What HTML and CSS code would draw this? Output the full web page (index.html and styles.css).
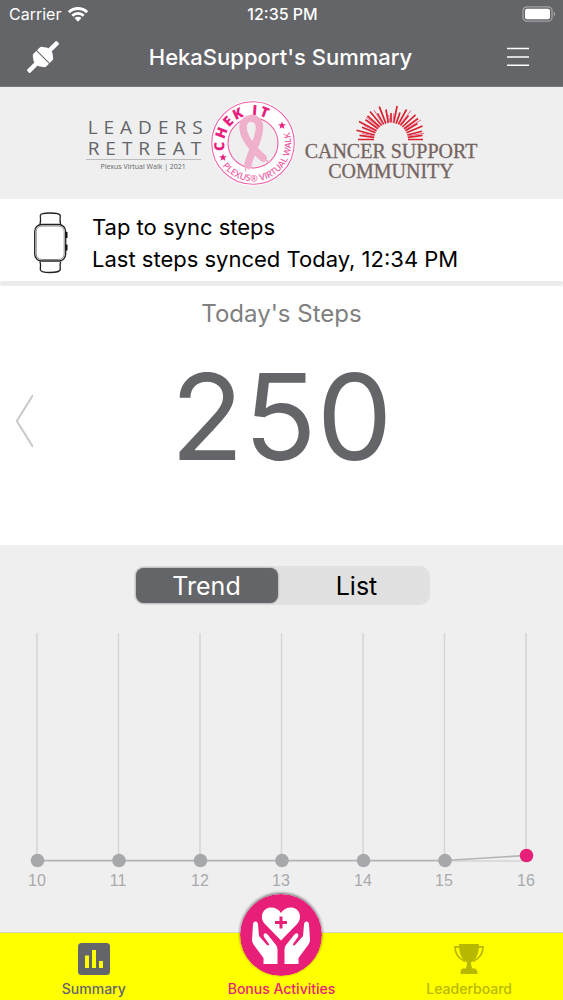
FILE: index.html
```
<!DOCTYPE html>
<html lang="en">
<head>
	<meta charset="utf-8">
	<meta name="viewport" content="width=device-width, initial-scale=1">
	<title>HekaSupport's Summary</title>
	<link rel="stylesheet" href="styles.css">
</head>
<body>
<div class="app">

	<header class="header">
		<div class="status-bar">
			<div class="carrier">
				<span>Carrier</span>
				<svg class="wifi" viewBox="0 0 20 16" width="20" height="16">
					<g fill="none" stroke="#fff" stroke-width="2.8">
						<path d="M0.9 6.2a13 13 0 0 1 18.2 0"/>
						<path d="M4.3 9.7a8.2 8.2 0 0 1 11.4 0"/>
					</g>
					<path d="M6.5 12.1a5 5 0 0 1 7 0L10 15.8z" fill="#fff"/>
				</svg>
			</div>
			<div class="clock">12:35 PM</div>
			<svg class="battery" viewBox="0 0 34 16" width="34" height="16">
				<rect x="1" y="0.8" width="29" height="14.4" rx="4" fill="none" stroke="#a3a4a7" stroke-width="1.3"/>
				<rect x="3" y="2.8" width="25" height="10.4" rx="2" fill="#fff"/>
				<path d="M31.6 5.6c2 .8 2 4 0 4.8z" fill="#a3a4a7"/>
			</svg>
		</div>
		<div class="nav-bar">
			<button class="icon-button" type="button" aria-label="Connect device">
				<svg viewBox="0 0 34 34" width="34" height="34">
					<g transform="rotate(45 17 17)" fill="#fff">
						<rect x="14.800" y="-4" width="4.400" height="14" rx="1"/>
						<path d="M8 16.500V12.500q0-1.500 1.500-2.300L12.500 8q1-.800 2-.800h5q1 0 2 .800L24.500 10.200q1.500.800 1.500 2.300v4z"/>
						<path d="M8 17.500h18V21.500q0 1.500-1.500 2.300L21.500 26q-1 .800-2 .800h-5q-1 0-2-.800L9.500 23.800Q8 23 8 21.500z"/>
						<rect x="14.800" y="24" width="4.400" height="14" rx="1"/>
					</g>
				</svg>
			</button>
			<h1 class="title">HekaSupport's Summary</h1>
			<button class="icon-button" type="button" aria-label="Menu">
				<svg viewBox="0 0 22 20" width="22" height="20">
					<path d="M0 1.500h22M0 10h22M0 18.300h22" stroke="#fff" stroke-width="1.400"/>
				</svg>
			</button>
		</div>
	</header>

	<section class="sponsors">
		<div class="leaders">
			<div class="leaders-name">LEADERS</div>
			<div class="leaders-name">RETREAT</div>
			<div class="leaders-note">Plexus Virtual Walk | 2021</div>
		</div>
		<svg class="badge" viewBox="0 0 86 86" width="86" height="86">
			<defs>
				<path id="arc-top" d="M15.100 50.800A29 29 0 0 1 71.600 37.400"/>
				<path id="arc-bottom" d="M12.500 65.700A38 38 0 0 0 79.800 33"/>
				<path id="star" d="M0-4L1-1.300 3.900-1.300 1.600.500 2.400 3.300 0 1.700-2.400 3.300-1.600.500-3.900-1.300-1-1.300z"/>
			</defs>
			<circle cx="43" cy="43" r="34" fill="none" stroke="#fff" stroke-width="17.500"/>
			<circle cx="43" cy="43" r="41.300" fill="none" stroke="#f05fa8" stroke-width="1.100"/>
			<circle cx="43" cy="43" r="25" fill="none" stroke="#f05fa8" stroke-width="1.100"/>
			<g fill="#e71f7e">
				<text class="badge-top"><textPath href="#arc-top">CHEK IT</textPath></text>
				<use href="#star" x="13" y="57.500"/>
				<use href="#star" x="72" y="25.500"/>
			</g>
			<text class="badge-bottom"><textPath href="#arc-bottom">PLEXUS® VIRTUAL WALK</textPath></text>
			<g fill="none" stroke="#efb0cc" stroke-linecap="round">
				<path d="M38 65C39 55 49.500 41 49.500 27C49.500 15 33 16 33 27C33 36 42 48 53 58" stroke-width="7.500"/>
				<path d="M35.500 62v9M39 66v3M54 60l6 2" stroke-width="1.500"/>
			</g>
		</svg>
		<div class="community">
			<svg viewBox="0 0 72 36" width="72" height="36">
				<g stroke-width="1.700" stroke="#d8232f">
					<path d="M19 34.500H3M19.200 32.300L4.500 30.400M19.700 30L1.500 25.300M20.500 27.700L7 22.300M21.600 25.700L4 16.500M23 23.700L10.500 14.800M24.700 22L12.500 10.800M26.600 20.500L15 6.500M28.700 19.400L22.500 8.300M30.900 18.600L24.300 1.600M33.300 18L31 4.500M36 17.500V8"/>
					<path d="M53 34.500H68M52.800 32.300L67.500 30.400M52.300 30L67 26.200M51.500 27.700L67.500 21M50.400 25.700L62.500 18.500M49 23.700L63 13.500M47.300 22L60.500 9.800M45.400 20.500L53.500 10.500M43.300 19.400L51.500 4.500M41.100 18.600L45 7.500M38.700 18L42.100 1"/>
				</g>
				<g stroke-width="1" stroke="#e8668f">
					<path d="M19.300 31L7 28.500M21 26.500L9 20.500M24 22.700L11 12M28 19.700L19 5M35 17.600L33.500 10"/>
					<path d="M52.500 31L69 28.300M49.800 24.700L66 15M44.500 20L56 5.500M38 17.700L39 8"/>
				</g>
			</svg>
			<div class="community-name">CANCER SUPPORT<br>COMMUNITY</div>
		</div>
	</section>

	<button class="sync" type="button">
		<svg class="watch" viewBox="0 0 36 62" width="36" height="62">
			<g fill="none" stroke="#222" stroke-width="1.300">
				<path d="M7 12.500Q8 9 7.300 3.500Q7.300 1 17 1T27.300 3.500Q26.600 9 27.600 12.500"/>
				<path d="M7 49.500Q8 53 7.300 57.500Q7.300 60.500 17 60.500T27.300 57.500Q26.600 53 27.600 49.500"/>
				<rect x="1.700" y="12.500" width="31" height="36.500" rx="7"/>
				<rect x="3.200" y="14" width="28" height="33.500" rx="5.500" stroke="#888" stroke-width="1"/>
			</g>
			<path d="M33.500 20v6M33.500 32.500v6" stroke="#111" stroke-width="2"/>
		</svg>
		<span>Tap to sync steps<br>Last steps synced Today, 12:34 PM</span>
	</button>
	<div class="divider"></div>

	<section class="steps">
		<h2 class="steps-title">Today's Steps</h2>
		<div class="steps-row">
			<button class="previous" type="button" aria-label="Previous day">
				<svg viewBox="0 0 18 54" width="18" height="54">
					<path d="M18 1L1.800 27 18 53" fill="none" stroke="#c8c9cb" stroke-width="2"/>
				</svg>
			</button>
			<div class="steps-count">250</div>
		</div>
	</section>

	<section class="history">
		<div class="segments">
			<button class="segment active" type="button">Trend</button>
			<button class="segment" type="button">List</button>
		</div>
		<svg class="chart" viewBox="0 0 563 264">
			<path class="grid" d="M37 4v228M118.500 4v228M200 4v228M281.500 4v228M363 4v228M444.500 4v228M526 4v228M37 232h489"/>
			<path class="trend" d="M37 231.500H445L526 226.500"/>
			<g fill="#a7a8ac">
				<circle cx="37.500" cy="231.500" r="6.800"/>
				<circle cx="119" cy="231.500" r="6.800"/>
				<circle cx="200.500" cy="231.500" r="6.800"/>
				<circle cx="282" cy="231.500" r="6.800"/>
				<circle cx="363.500" cy="231.500" r="6.800"/>
				<circle cx="445" cy="231.500" r="6.800"/>
			</g>
			<circle cx="526.500" cy="226.500" r="6.800" fill="#e71f78"/>
			<g class="days">
				<text x="37" y="257">10</text>
				<text x="118" y="257">11</text>
				<text x="200" y="257">12</text>
				<text x="281" y="257">13</text>
				<text x="363" y="257">14</text>
				<text x="444" y="257">15</text>
				<text x="526" y="257">16</text>
			</g>
		</svg>
	</section>

	<nav class="tabs">
		<a class="tab current" href="#summary">
			<svg viewBox="0 0 32 32" width="32" height="32">
				<rect width="32" height="32" rx="3.500" fill="#646569"/>
				<path d="M7 12.500h4V25H7zM14 7h4v18h-4zM21 18h4v7h-4z" fill="#ff0"/>
			</svg>
			<span>Summary</span>
		</a>
		<a class="tab bonus" href="#bonus">
			<svg class="bonus-icon" viewBox="0 0 82 82" width="82" height="82">
				<circle cx="41" cy="41" r="41" fill="#e71f78"/>
				<g fill="#fff">
					<path d="M41 46.500L24.500 29.500C19 23 23 13.500 31 13.500Q37.500 13.500 41 19Q44.500 13.500 51 13.500C59 13.500 63 23 57.500 29.500z"/>
					<path id="hand" d="M13 30.500q.300-3 2.500-3t2.500 3l1 11.500 7.500 8.500q2 1.500 2.500.500.300-1-1-2.500L24 43q-1-2.500.500-3.500t3.500 1.500l8 10q1.500 2 1.500 4.500v14.500H23.500V64L13.500 50.500q-1.500-2-1.500-4.500z"/>
					<use href="#hand" transform="matrix(-1 0 0 1 82 0)"/>
				</g>
				<path d="M41 22.500v12M35 28.500h12" stroke="#e71f78" stroke-width="3"/>
			</svg>
			<span>Bonus Activities</span>
		</a>
		<a class="tab leaderboard" href="#leaderboard">
			<svg viewBox="0 0 32 32" width="32" height="32">
				<g fill="#b8b800">
					<path d="M6 1h20c0 9-2 15-8 18.500q0 4 1.500 6H22q2 .500 2.500 3.500V31H7.500L8 27q.500-1.500 2-1.500h2.500q1.500-2 1.500-6C8 16 6 10 6 1z"/>
				</g>
				<path d="M7 3.800H2Q2 14 12 18.500M25 3.800h5Q30 14 20 18.500" fill="none" stroke="#b8b800" stroke-width="1.700"/>
			</svg>
			<span>Leaderboard</span>
		</a>
	</nav>

</div>
</body>
</html>
```
FILE: styles.css
```
* {
	box-sizing: border-box;
}
body {
	margin: 0;
	font-family: Inter, "Liberation Sans", sans-serif;
	background: #fff;
}
button {
	border: 0;
	padding: 0;
	background: none;
	font: inherit;
	color: inherit;
	cursor: pointer;
}
svg {
	display: block;
	flex-shrink: 0;
}
.app {
	display: flex;
	flex-direction: column;
	min-height: 100vh;
}

/* header */
.header {
	background: #646569;
	color: #fff;
	border-bottom: 1px solid #77787b;
}
.status-bar {
	display: grid;
	grid-template-columns: 1fr auto 1fr;
	align-items: center;
	height: 28px;
	padding: 0 7px 0 9px;
	font-size: 16px;
}
.carrier {
	display: flex;
	align-items: center;
	gap: 7px;
}
.clock {
	font-weight: 500;
}
.battery {
	justify-self: end;
}
.nav-bar {
	display: grid;
	grid-template-columns: 34px 1fr 34px;
	align-items: center;
	height: 58px;
	padding: 0 28px 0 26px;
}
.icon-button {
	display: flex;
	justify-content: center;
}
.title {
	margin: 0;
	font-size: 22px;
	font-weight: 500;
	line-height: 32px;
	text-align: center;
}

/* sponsor logos */
.sponsors {
	display: flex;
	justify-content: center;
	align-items: center;
	gap: 9px;
	height: 112px;
	background: #efefef;
}
.leaders {
	width: 115px;
	padding-top: 4px;
	font-family: "Open Sans", sans-serif;
	color: #646569;
}
.leaders-name {
	padding-left: 2px;
	font-size: 19px;
	line-height: 21px;
	letter-spacing: 6px;
	white-space: nowrap;
}
.leaders-note {
	border-top: 1px solid #bbb;
	font-size: 7px;
	line-height: 14px;
	text-align: center;
}
.badge-top {
	font: 800 14px "Open Sans", sans-serif;
	letter-spacing: 2px;
}
.badge-bottom {
	font: 600 9px "Open Sans", sans-serif;
	fill: #ee5fa5;
}
.community {
	display: flex;
	flex-direction: column;
	align-items: center;
}
.community-name {
	font: 20px/20px "Liberation Serif", serif;
	text-align: center;
	color: #75645f;
	-webkit-text-stroke: 0.3px #75645f;
}

/* sync row */
.sync {
	display: flex;
	align-items: center;
	gap: 23px;
	height: 82px;
	padding: 6px 33px 0;
	font-size: 22px;
	line-height: 32px;
	text-align: left;
	color: #000;
}
.divider {
	height: 5px;
	border-radius: 3px;
	background: #ececec;
}

/* today's count */
.steps {
	height: 259px;
}
.steps-title {
	margin: 0;
	padding-top: 12px;
	font-size: 24px;
	font-weight: 400;
	line-height: 32px;
	text-align: center;
	color: #808080;
}
.steps-row {
	display: grid;
	grid-template-columns: 18px 1fr 18px;
	align-items: center;
	padding: 14px 15px 0;
}
.previous {
	padding-top: 8px;
}
.steps-count {
	font-size: 120px;
	line-height: 146px;
	text-align: center;
	color: #646569;
}

/* history chart */
.history {
	flex: 1;
	padding-top: 21px;
	background: #efefef;
}
.segments {
	display: flex;
	width: 296px;
	max-width: 90%;
	height: 39px;
	margin: 0 auto 24px;
	padding: 2px;
	border-radius: 10px;
	background: #e1e1e1;
}
.segment {
	flex: 1;
	border-radius: 8px;
	font-size: 25px;
	color: #000;
}
.segment.active {
	margin-right: 8px;
	background: #646569;
	color: #fff;
	box-shadow: 0 0 2px rgba(0, 0, 0, 0.5);
}
.chart {
	width: 100%;
}
.grid {
	stroke: #d5d5d6;
	stroke-width: 1.5;
}
.trend {
	fill: none;
	stroke: #b2b3b6;
	stroke-width: 1.6;
}
.days {
	font-family: "Liberation Sans", sans-serif;
	font-size: 16px;
	text-anchor: middle;
	fill: #a9aaad;
}

/* tab bar */
.tabs {
	display: grid;
	grid-template-columns: repeat(3, 1fr);
	height: 68px;
	border-top: 1px solid #d9d9c8;
	background: #ff0;
}
.tab {
	position: relative;
	display: flex;
	flex-direction: column;
	align-items: center;
	justify-content: flex-end;
	gap: 5px;
	padding-bottom: 2px;
	font-size: 14px;
	font-weight: 500;
	line-height: 18px;
	text-decoration: none;
}
.current {
	color: #646569;
}
.bonus {
	color: #e71f78;
}
.leaderboard {
	color: #b8b800;
}
/* round button that rises over the bar */
.bonus-icon {
	position: absolute;
	left: 50%;
	bottom: 24px;
	margin-left: -41px;
	border-radius: 50%;
	box-shadow: 0 -1px 3px rgba(0, 0, 0, 0.6);
}
```
